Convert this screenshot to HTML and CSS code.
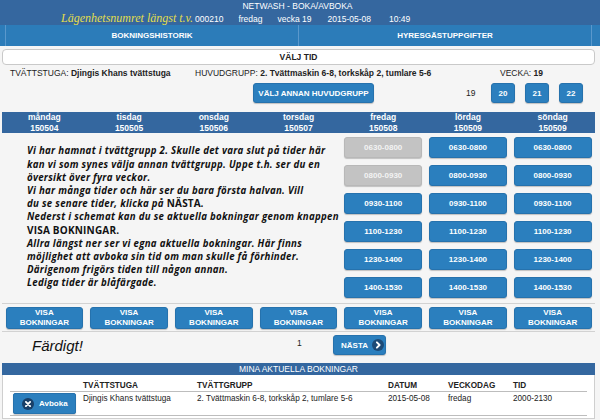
FILE: index.html
```html
<!DOCTYPE html>
<html lang="sv">
<head>
<meta charset="utf-8">
<title>NETWASH - BOKA/AVBOKA</title>
<link rel="stylesheet" href="styles.css">
</head>
<body>
<header class="top">
  <div class="title">NETWASH - BOKA/AVBOKA</div>
  <div class="meta">
    <span class="hint">Lägenhetsnumret längst t.v.</span>
    <span class="apt">000210</span>
    <span class="wday">fredag</span>
    <span class="wk">vecka 19</span>
    <span class="date">2015-05-08</span>
    <span class="clock">10:49</span>
  </div>
</header>
<nav class="tabs">
  <a class="tab">BOKNINGSHISTORIK</a>
  <a class="tab">HYRESGÄSTUPPGIFTER</a>
</nav>
<main class="main">
  <div class="panel-title">VÄLJ TID</div>
  <div class="info">
    <div class="info-item laundry">TVÄTTSTUGA: <b>Djingis Khans tvättstuga</b></div>
    <div class="info-item group">HUVUDGRUPP: <b>2. Tvättmaskin 6-8, torkskåp 2, tumlare 5-6</b></div>
    <div class="info-item week">VECKA: <b>19</b></div>
  </div>
  <div class="controls">
    <button class="btn btn-group">VÄLJ ANNAN HUVUDGRUPP</button>
    <span class="cur-week">19</span>
    <button class="btn btn-week">20</button>
    <button class="btn btn-week">21</button>
    <button class="btn btn-week">22</button>
  </div>
  <div class="schedule">
    <div class="days">
      <div class="dayhead">måndag<br>150504</div>
      <div class="dayhead">tisdag<br>150505</div>
      <div class="dayhead">onsdag<br>150506</div>
      <div class="dayhead">torsdag<br>150507</div>
      <div class="dayhead">fredag<br>150508</div>
      <div class="dayhead">lördag<br>150509</div>
      <div class="dayhead">söndag<br>150509</div>
    </div>
    <div class="slots">
      <div class="note"><p>Vi har hamnat i tvättgrupp 2. Skulle det vara slut på tider här<br>kan vi som synes välja annan tvättgrupp. Uppe t.h. ser du en<br>översikt över fyra veckor.<br>Vi har många tider och här ser du bara första halvan. Vill<br>du se senare tider, klicka på <span class="caps">NÄSTA</span>.<br>Nederst i schemat kan du se aktuella bokningar genom knappen<br><span class="caps">VISA BOKNINGAR.</span><br>Allra längst ner ser vi egna aktuella bokningar. Här finns<br>möjlighet att avboka sin tid om man skulle få förhinder.<br>Därigenom frigörs tiden till någon annan.<br>Lediga tider är blåfärgade.</p></div>
      <div class="slot"><button class="btn btn-slot taken">0630-0800</button></div>
      <div class="slot"><button class="btn btn-slot">0630-0800</button></div>
      <div class="slot"><button class="btn btn-slot">0630-0800</button></div>
      <div class="slot"><button class="btn btn-slot taken">0800-0930</button></div>
      <div class="slot"><button class="btn btn-slot">0800-0930</button></div>
      <div class="slot"><button class="btn btn-slot">0800-0930</button></div>
      <div class="slot"><button class="btn btn-slot">0930-1100</button></div>
      <div class="slot"><button class="btn btn-slot">0930-1100</button></div>
      <div class="slot"><button class="btn btn-slot">0930-1100</button></div>
      <div class="slot"><button class="btn btn-slot">1100-1230</button></div>
      <div class="slot"><button class="btn btn-slot">1100-1230</button></div>
      <div class="slot"><button class="btn btn-slot">1100-1230</button></div>
      <div class="slot"><button class="btn btn-slot">1230-1400</button></div>
      <div class="slot"><button class="btn btn-slot">1230-1400</button></div>
      <div class="slot"><button class="btn btn-slot">1230-1400</button></div>
      <div class="slot"><button class="btn btn-slot">1400-1530</button></div>
      <div class="slot"><button class="btn btn-slot">1400-1530</button></div>
      <div class="slot"><button class="btn btn-slot">1400-1530</button></div>
    </div>
    <div class="visa-row">
      <div class="slot"><button class="btn btn-visa">VISA<br>BOKNINGAR</button></div>
      <div class="slot"><button class="btn btn-visa">VISA<br>BOKNINGAR</button></div>
      <div class="slot"><button class="btn btn-visa">VISA<br>BOKNINGAR</button></div>
      <div class="slot"><button class="btn btn-visa">VISA<br>BOKNINGAR</button></div>
      <div class="slot"><button class="btn btn-visa">VISA<br>BOKNINGAR</button></div>
      <div class="slot"><button class="btn btn-visa">VISA<br>BOKNINGAR</button></div>
      <div class="slot"><button class="btn btn-visa">VISA<br>BOKNINGAR</button></div>
    </div>
  </div>
  <div class="pager">
    <span class="done">Färdigt!</span>
    <span class="page">1</span>
    <button class="btn btn-next">NÄSTA
      <svg class="ico" width="12" height="12" viewBox="0 0 12 12"><circle cx="6" cy="6" r="6" fill="#1d4a76"/><path d="M4.9 3.3 L7.6 6 L4.9 8.7" fill="none" stroke="#fff" stroke-width="1.9" stroke-linecap="round" stroke-linejoin="round"/></svg>
    </button>
  </div>
  <section class="mybookings">
    <div class="mb-title">MINA AKTUELLA BOKNINGAR</div>
    <div class="mb-box">
      <table class="mb-table">
        <colgroup>
          <col class="c1"><col class="c2"><col class="c3"><col class="c4"><col class="c5"><col class="c6">
        </colgroup>
        <thead>
          <tr><th></th><th>TVÄTTSTUGA</th><th>TVÄTTGRUPP</th><th>DATUM</th><th>VECKODAG</th><th>TID</th></tr>
        </thead>
        <tbody>
          <tr>
            <td class="act"><button class="btn btn-cancel"><svg class="ico" width="12" height="12" viewBox="0 0 12 12"><circle cx="6" cy="6" r="6" fill="#183f68"/><path d="M3.9 3.9 L8.1 8.1 M8.1 3.9 L3.9 8.1" stroke="#fff" stroke-width="1.9" stroke-linecap="round"/></svg>Avboka</button></td>
            <td>Djingis Khans tvättstuga</td>
            <td>2. Tvättmaskin 6-8, torkskåp 2, tumlare 5-6</td>
            <td>2015-05-08</td>
            <td>fredag</td>
            <td>2000-2130</td>
          </tr>
        </tbody>
      </table>
    </div>
  </section>
</main>
</body>
</html>
```
FILE: styles.css
```css
* { box-sizing: border-box; }
html, body { margin: 0; padding: 0; }
body {
  width: 600px;
  height: 420px;
  overflow: hidden;
  background: #f5f5f5;
  font-family: "Liberation Sans", Arial, sans-serif;
  font-size: 8.5px;
  color: #222;
}

/* header */
.top { background: #35679f; height: 25px; color: #fff; }
.title { text-align: center; line-height: 12px; height: 12px; padding-right: 5px; }
.meta { display: flex; align-items: baseline; height: 13px; line-height: 13px; }
.hint {
  width: 193px;
  text-align: right;
  font-family: "Liberation Serif", serif;
  font-style: italic;
  font-size: 12px;
  color: #e3de4c;
}
.apt { margin-left: 2px; }
.wday { margin-left: 15px; }
.wk { margin-left: 15px; }
.date { margin-left: 16px; }
.clock { margin-left: 18px; }

/* tabs */
.tabs { display: flex; background: #2c7cb9; height: 21px; padding: 0 8px 0 5px; }
.tab {
  flex: 1;
  text-align: center;
  color: #fff;
  font-weight: bold;
  font-size: 8px;
  line-height: 21px;
  border-left: 1px solid #5a98cc;
}
.tab:last-child { border-right: 1px solid #5a98cc; }

/* main */
.main { margin: 3px 5px 0 2px; }
.panel-title {
  background: #fff;
  border: 1px solid #c9c9c9;
  border-radius: 4px;
  height: 16px;
  line-height: 14px;
  text-align: center;
  font-weight: bold;
}
.info { display: flex; margin-top: 1px; height: 14px; line-height: 14px; padding-left: 8px; }
.laundry { width: 185px; }
.group { width: 305px; }

.btn {
  font-family: "Liberation Sans", Arial, sans-serif;
  font-weight: bold;
  font-size: 8px;
  color: #fff;
  background: #2b7fbe;
  border: 1px solid #2672ad;
  border-radius: 3px;
  box-shadow: 0 1px 1px rgba(0, 0, 0, 0.22);
  padding: 0;
  margin: 0;
  cursor: pointer;
}
.controls { display: flex; align-items: center; margin-top: 3px; height: 20px; padding-left: 251px; }
.btn-group { width: 121px; height: 20px; }
.cur-week { margin-left: 92px; width: 25px; }
.btn-week { width: 24px; height: 20px; margin-right: 10px; }

/* schedule */
.days {
  display: grid;
  grid-template-columns: repeat(7, 1fr);
  margin-top: 9px;
  height: 21px;
  background: #34679f;
  color: #fff;
  font-weight: bold;
  line-height: 10.5px;
  text-align: center;
  padding-top: 0;
}
.slots {
  display: grid;
  grid-template-columns: repeat(7, 1fr);
  grid-auto-rows: 28px;
}
.note {
  grid-column: 1 / 5;
  grid-row: 1 / 7;
  display: flex;
  align-items: center;
  padding-left: 25px;
}
.note p {
  margin: 0;
  white-space: nowrap;
  font-family: "Open Sans", Lato, sans-serif;
  font-style: italic;
  font-weight: bold;
  font-size: 9.7px;
  letter-spacing: 0.28px;
  line-height: 13.2px;
  color: #111;
}
.note .caps { font-style: normal; font-size: 10px; letter-spacing: 0.2px; }
.slot { padding: 4px 3.5px 0; }
.btn-slot { width: 100%; height: 21px; }
.btn-slot.taken { background: #c3c3c3; border-color: #b8b8b8; color: #f3f3f3; }

.visa-row {
  display: grid;
  grid-template-columns: repeat(7, 1fr);
  margin-top: 2px;
  border-top: 1px solid #d2d2d2;
  border-bottom: 1px solid #d2d2d2;
  padding: 3px 0 2px;
}
.visa-row .slot { padding: 0 3.5px; }
.btn-visa { width: 100%; height: 22px; line-height: 10px; }

/* pager */
.pager { display: flex; align-items: center; margin-top: 3px; height: 20px; padding-left: 30px; }
.done { width: 265px; font-size: 15px; font-style: italic; color: #111; }
.page { width: 36px; margin-top: -4px; }
.btn-next {
  display: flex;
  align-items: center;
  width: 53px;
  height: 20px;
  padding-left: 7px;
}
.btn-next .ico { margin-left: 4px; }

/* my bookings */
.mybookings { margin-top: 8px; }
.mb-title {
  background: #34679f;
  color: #fff;
  text-align: center;
  height: 12px;
  line-height: 12px;
}
.mb-box {
  background: #fff;
  border: 1px solid #cfcfcf;
  border-top: none;
  padding: 1px 7px 2px;
}
.mb-table { width: 100%; border-collapse: collapse; font-size: 8.2px; table-layout: fixed; }
.c1 { width: 73px; }
.c2 { width: 114px; }
.c3 { width: 191px; }
.c4 { width: 60px; }
.c5 { width: 65px; }
.mb-table th {
  text-align: left;
  font-weight: bold;
  padding: 5px 0 1px;
  line-height: 9px;
  border-bottom: 1px solid #bdbdbd;
}
.mb-table td {
  vertical-align: top;
  padding: 2px 0 0;
  line-height: 10px;
  border-bottom: 1px solid #bdbdbd;
  white-space: nowrap;
}
.mb-table td.act { padding: 1px 0 1px 3px; }
.btn-cancel {
  display: flex;
  align-items: center;
  width: 63px;
  height: 21px;
  padding-left: 8px;
  border-radius: 2px;
}
.btn-cancel .ico { margin-right: 5px; }
```
